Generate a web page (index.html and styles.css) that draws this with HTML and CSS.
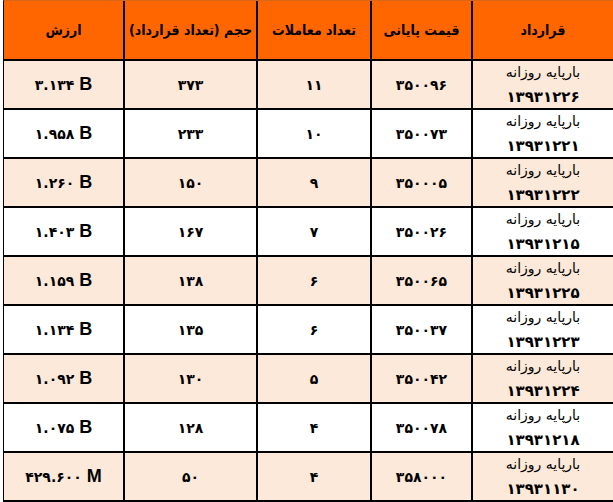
FILE: index.html
```html
<!DOCTYPE html>
<html lang="fa" dir="rtl">
<head>
<meta charset="utf-8">
<link rel="stylesheet" href="styles.css">
</head>
<body>
<div class="grid">
  <div class="hd">قرارداد</div>
  <div class="hd">قیمت پایانی</div>
  <div class="hd">تعداد معاملات</div>
  <div class="hd">حجم (تعداد قرارداد)</div>
  <div class="hd">ارزش</div>

  <div class="c name alt"><span class="t">بارپایه روزانه</span><span class="d">۱۳۹۳۱۲۲۶</span></div>
  <div class="c alt">۳۵۰۰۹۶</div><div class="c alt">۱۱</div><div class="c alt">۳۷۳</div>
  <div class="c val alt"><span dir="ltr">۳.۱۳۴ <b>B</b></span></div>

  <div class="c name"><span class="t">بارپایه روزانه</span><span class="d">۱۳۹۳۱۲۲۱</span></div>
  <div class="c">۳۵۰۰۷۳</div><div class="c">۱۰</div><div class="c">۲۳۳</div>
  <div class="c val"><span dir="ltr">۱.۹۵۸ <b>B</b></span></div>

  <div class="c name alt"><span class="t">بارپایه روزانه</span><span class="d">۱۳۹۳۱۲۲۲</span></div>
  <div class="c alt">۳۵۰۰۰۵</div><div class="c alt">۹</div><div class="c alt">۱۵۰</div>
  <div class="c val alt"><span dir="ltr">۱.۲۶۰ <b>B</b></span></div>

  <div class="c name"><span class="t">بارپایه روزانه</span><span class="d">۱۳۹۳۱۲۱۵</span></div>
  <div class="c">۳۵۰۰۲۶</div><div class="c">۷</div><div class="c">۱۶۷</div>
  <div class="c val"><span dir="ltr">۱.۴۰۳ <b>B</b></span></div>

  <div class="c name alt"><span class="t">بارپایه روزانه</span><span class="d">۱۳۹۳۱۲۲۵</span></div>
  <div class="c alt">۳۵۰۰۶۵</div><div class="c alt">۶</div><div class="c alt">۱۳۸</div>
  <div class="c val alt"><span dir="ltr">۱.۱۵۹ <b>B</b></span></div>

  <div class="c name"><span class="t">بارپایه روزانه</span><span class="d">۱۳۹۳۱۲۲۳</span></div>
  <div class="c">۳۵۰۰۳۷</div><div class="c">۶</div><div class="c">۱۳۵</div>
  <div class="c val"><span dir="ltr">۱.۱۳۴ <b>B</b></span></div>

  <div class="c name alt"><span class="t">بارپایه روزانه</span><span class="d">۱۳۹۳۱۲۲۴</span></div>
  <div class="c alt">۳۵۰۰۴۲</div><div class="c alt">۵</div><div class="c alt">۱۳۰</div>
  <div class="c val alt"><span dir="ltr">۱.۰۹۲ <b>B</b></span></div>

  <div class="c name"><span class="t">بارپایه روزانه</span><span class="d">۱۳۹۳۱۲۱۸</span></div>
  <div class="c">۳۵۰۰۷۸</div><div class="c">۴</div><div class="c">۱۲۸</div>
  <div class="c val"><span dir="ltr">۱.۰۷۵ <b>B</b></span></div>

  <div class="c name alt"><span class="t">بارپایه روزانه</span><span class="d">۱۳۹۳۱۱۳۰</span></div>
  <div class="c alt">۳۵۸۰۰۰</div><div class="c alt">۴</div><div class="c alt">۵۰</div>
  <div class="c val alt"><span dir="ltr">۴۲۹.۶۰۰ <b>M</b></span></div>
</div>
</body>
</html>
```
FILE: styles.css
```css
html, body {
  margin: 0;
  padding: 0;
  background: #ffffff;
}
body {
  font-family: "DejaVu Sans", sans-serif;
  color: #000;
}
.grid {
  width: 609px;
  display: grid;
  grid-template-columns: 140px 99px 112px 131px 119px;
  grid-template-rows: 58px repeat(9, 47px);
  gap: 2px;
  background: #000;
  border-top: 1px solid #d9661c;
  border-left: 1px solid #000;
  border-bottom: 2px solid #000;
}
.hd {
  background: #ff6600;
  display: flex;
  align-items: center;
  justify-content: center;
  font-family: "DejaVu Sans Condensed", "DejaVu Sans", sans-serif;
  font-stretch: condensed;
  font-weight: bold;
  font-size: 14px;
  white-space: nowrap;
}
.c {
  background: #fff;
  display: flex;
  align-items: center;
  justify-content: center;
  font-weight: bold;
  font-size: 14px;
}
.c.alt {
  background: #fde9d9;
}
.name {
  flex-direction: column;
  justify-content: space-between;
  padding: 1px 0 0;
}
.name .t {
  font-weight: normal;
  font-size: 14px;
  line-height: 20px;
}
.name .d {
  font-size: 15px;
  line-height: 22px;
}
.val span {
  white-space: pre;
}
.val b {
  font-family: "Liberation Sans", Arial, sans-serif;
  font-size: 18px;
  font-weight: bold;
}
```
